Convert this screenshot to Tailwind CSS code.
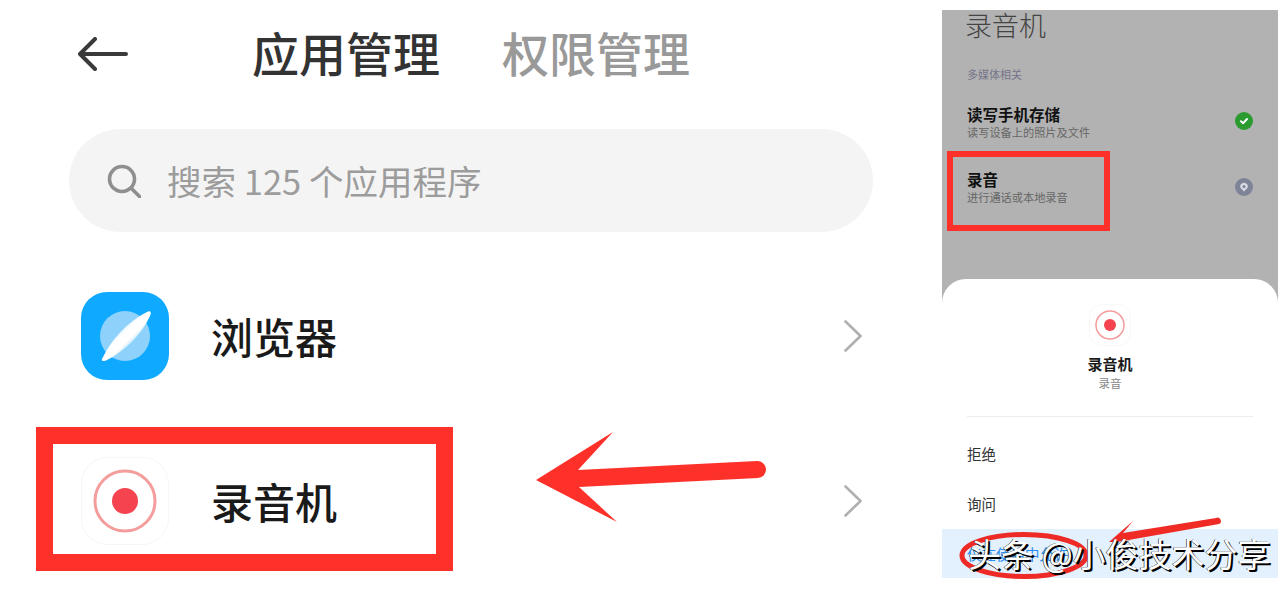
<!DOCTYPE html>
<html lang="zh-CN">
<head>
    <meta charset="UTF-8">
    <title>应用管理</title>
    <script src="https://cdn.jsdelivr.net/npm/@tailwindcss/browser@4"></script>
</head>
<body class="bg-white">
<div class="relative flex w-[1288px] h-[592px] overflow-hidden bg-white font-['Noto_Sans_CJK_SC','Noto_Sans',sans-serif]">

    <!-- 左侧: 应用管理 -->
    <div class="w-[942px] shrink-0">
        <div class="flex items-center h-[110px] pl-[78px]">
            <svg class="mb-[2px] w-[50px] h-[34px]" viewBox="0 0 50 34" fill="none" stroke="#3a3a3a" stroke-width="4" stroke-linecap="round" stroke-linejoin="round">
                <path d="M48 17H3M17 2L2 17l15 15"/>
            </svg>
            <span class="ml-[124px] mb-[8px] text-[47px] leading-none font-medium text-[#333]">应用管理</span>
            <span class="ml-[62px] mb-[8px] text-[47px] leading-none font-medium text-[#999]">权限管理</span>
        </div>

        <div class="flex items-center ml-[69px] mt-[19px] w-[804px] h-[103px] pl-[38px] rounded-full bg-[#f4f4f4]">
            <svg class="w-[34px] h-[34px]" viewBox="0 0 34 34" fill="none" stroke="#8f8f8f" stroke-width="3.6" stroke-linecap="round">
                <circle cx="15" cy="15" r="12.5"/>
                <path d="M24 24l8.500 8.500"/>
            </svg>
            <span class="ml-[26px] text-[34.500px] leading-none text-[#9c9c9c] whitespace-nowrap">搜索 125 个应用程序</span>
        </div>

        <div class="flex items-center ml-[81px] mt-[60px] w-[781px] h-[88px]">
            <svg class="w-[88px] h-[88px]" viewBox="0 0 88 88">
                <defs>
                    <linearGradient id="stripe" x1="30" y1="30" x2="52" y2="52" gradientUnits="userSpaceOnUse">
                        <stop offset="0" stop-color="#8ed2fb"/>
                        <stop offset="0.55" stop-color="#fff"/>
                        <stop offset="0.8" stop-color="#fff"/>
                        <stop offset="1" stop-color="#b5e1fc"/>
                    </linearGradient>
                </defs>
                <rect width="88" height="88" rx="26" fill="#0fa9ff"/>
                <circle cx="44" cy="44" r="25" fill="#8ed2fb"/>
                <path d="M21 67C20 69 23 70 26 68C42 60 60 44 69 24C71 20 69 18 66 20C46 30 30 48 21 67Z" fill="url(#stripe)"/>
            </svg>
            <span class="ml-[42px] text-[42px] leading-none font-medium text-[#1a1a1a]">浏览器</span>
            <svg class="ml-auto w-[18px] h-[32px]" viewBox="0 0 18 32" fill="none" stroke="#b0b0b0" stroke-width="2.600" stroke-linecap="round" stroke-linejoin="round">
                <path d="M1.500 1.500L16.500 16L1.500 30.500"/>
            </svg>
        </div>

        <div class="flex items-center ml-[81px] mt-[77px] w-[781px] h-[88px]">
            <svg class="w-[88px] h-[88px]" viewBox="0 0 88 88">
                <rect x="0.500" y="0.500" width="87" height="87" rx="26" fill="#fff" stroke="#f6f6f6"/>
                <circle cx="44" cy="44" r="30" fill="none" stroke="#f59c9c" stroke-width="3"/>
                <circle cx="44" cy="44" r="13" fill="#f5444f"/>
            </svg>
            <span class="ml-[42px] text-[42px] leading-none font-medium text-[#1a1a1a]">录音机</span>
            <svg class="ml-auto w-[18px] h-[32px]" viewBox="0 0 18 32" fill="none" stroke="#b0b0b0" stroke-width="2.600" stroke-linecap="round" stroke-linejoin="round">
                <path d="M1.500 1.500L16.500 16L1.500 30.500"/>
            </svg>
        </div>
    </div>

    <!-- 右侧: 权限弹窗 -->
    <div class="flex flex-col mt-[10px] w-[336px] h-[568px] overflow-hidden bg-[#b2b2b2]">
        <div class="h-[269px] shrink-0 pl-[23px]">
            <div class="h-[30px] text-[27px] leading-[30px] font-light text-[#444]">录音机</div>
            <div class="mt-[26px] pl-[2px] text-[11px] leading-[16px] text-[#75758a]">多媒体相关</div>
            <div class="flex items-start justify-between mt-[22px] pl-[2px] pr-[25px]">
                <div>
                    <div class="text-[15.500px] leading-[20px] font-bold text-[#111]">读写手机存储</div>
                    <div class="mt-[1px] text-[11.200px] leading-[15px] text-[#666]">读写设备上的照片及文件</div>
                </div>
                <span class="flex items-center justify-center mt-[8px] w-[18px] h-[18px] rounded-full bg-[#2b9a2f]">
                    <svg class="w-[10px] h-[10px]" viewBox="0 0 10 10" fill="none" stroke="#fff" stroke-width="2" stroke-linecap="round" stroke-linejoin="round"><path d="M2 5.200l2.200 2L8 3"/></svg>
                </span>
            </div>
            <div class="flex items-start justify-between mt-[29px] pl-[2px] pr-[25px]">
                <div>
                    <div class="text-[15.500px] leading-[20px] font-bold text-[#111]">录音</div>
                    <div class="mt-[1px] text-[11.200px] leading-[15px] text-[#666]">进行通话或本地录音</div>
                </div>
                <span class="flex items-center justify-center mt-[9px] w-[18px] h-[18px] rounded-full bg-[#7e8397]">
                    <svg class="w-[10px] h-[10px]" viewBox="0 0 10 10"><path d="M5 9.500L1.400 5.800A3.800 3.800 0 1 1 8.600 5.800Z" fill="#d8dae2"/><circle cx="5" cy="4.500" r="1.500" fill="#7e8397"/></svg>
                </span>
            </div>
        </div>

        <div class="flex flex-col flex-1 rounded-t-[24px] bg-white">
            <div class="flex flex-col items-center pt-[25px]">
                <svg class="w-[42px] h-[42px]" viewBox="0 0 42 42">
                    <rect x="0.500" y="0.500" width="41" height="41" rx="12" fill="#fff" stroke="#f8f8f8"/>
                    <circle cx="21" cy="21" r="14" fill="none" stroke="#f59c9c" stroke-width="1.500"/>
                    <circle cx="21" cy="21" r="6" fill="#f5444f"/>
                </svg>
                <div class="mt-[8px] text-[15px] leading-[20px] font-bold text-[#1a1a1a]">录音机</div>
                <div class="mt-[1px] text-[11.500px] leading-[16px] text-[#888]">录音</div>
            </div>
            <div class="mx-[25px] mt-[25px] h-px bg-[#ececec]"></div>
            <div class="pl-[25px] mt-[26px] h-[22px] text-[14.500px] leading-[22px] text-[#333]">拒绝</div>
            <div class="pl-[25px] mt-[28px] h-[22px] text-[14.500px] leading-[22px] text-[#333]">询问</div>
            <div class="flex flex-1 items-center mt-[14px] pl-[25px] bg-[#e3f0fd] text-[14.500px] text-[#2a8cf0]">仅在使用中允许</div>
        </div>
    </div>

    <!-- 红色标注 -->
    <div class="absolute left-[36px] top-[427px] w-[417px] h-[144px] border-[17px] border-[#fe312a]"></div>
    <div class="absolute left-[947px] top-[151px] w-[163px] h-[80px] border-[6px] border-[#fe312a]"></div>
    <svg class="absolute left-0 top-0 w-[1288px] h-[592px] pointer-events-none" viewBox="0 0 1288 592">
        <path d="M536 480L613 432L578 470L757 461A8.500 8.500 0 0 1 758 478L579 487L617 522Z" fill="#fe312a"/>
        <path d="M1109 542L1133 521L1123 533L1216 518A2.800 2.800 0 0 1 1219 524L1123 541L1116 542Z" fill="#f02a25"/>
        <ellipse cx="1024" cy="555.500" rx="62" ry="21" fill="none" stroke="#ee2a26" stroke-width="5"/>
    </svg>

    <!-- 水印 -->
    <div class="absolute left-[968px] top-[533px] text-[33px] leading-[40px] whitespace-nowrap text-white [text-shadow:2px_2px_0_#000,-0.500px_-0.500px_0_#000]">头条 @小俊技术分享</div>
</div>
</body>
</html>
